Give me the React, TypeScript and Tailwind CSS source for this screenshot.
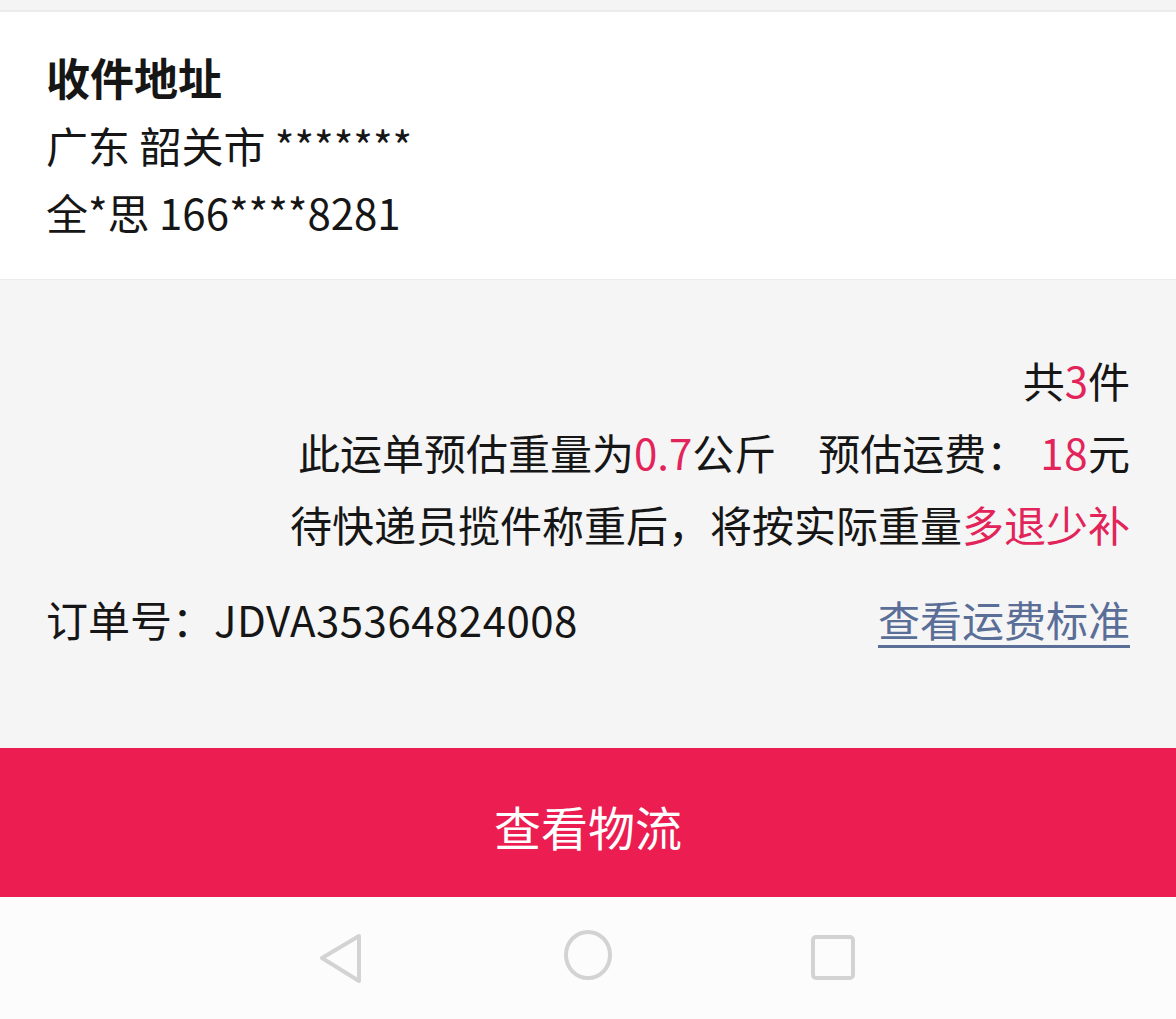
import React from "react";

export default function App() {
  return (
    <div className="w-[1176px] h-[1019px] bg-[#f5f5f5] flex flex-col text-[#161616] font-['Noto_Sans_CJK_SC','Noto_Sans',sans-serif] overflow-hidden">
      <div className="h-[10px] bg-[#f4f4f4] shrink-0" />
      <div className="bg-white border-t-2 border-b border-[#ebebeb] px-[46px] pt-[32px] pb-[34px] shrink-0">
        <div className="text-[44px] leading-[67px] font-bold">收件地址</div>
        <div className="text-[42px] leading-[67px]">广东 韶关市 *******</div>
        <div className="text-[42px] leading-[67px]">全*思 166****8281</div>
      </div>
      <div className="flex-1 flex flex-col px-[46px] pt-[64px] text-[42px]">
        <div className="flex flex-col items-end leading-[72px]">
          <div>
            共<span className="text-[#e2245a]">3</span>件
          </div>
          <div className="flex items-center">
            <span>
              此运单预估重量为<span className="text-[#e2245a]">0.7</span>公斤
            </span>
            <span className="inline-block w-[42px]" />
            <span>预估运费：</span>
            <span className="inline-block w-[12px]" />
            <span>
              <span className="text-[#e2245a] tracking-[0.5px]">18</span>元
            </span>
          </div>
          <div>
            待快递员揽件称重后，将按实际重量<span className="text-[#e2245a]">多退少补</span>
          </div>
        </div>
        <div className="mt-[23px] flex items-center justify-between leading-[72px]">
          <div>
            订单号：<span className="tracking-[0.5px]">JDVA35364824008</span>
          </div>
          <div className="text-[#5a6e98] underline decoration-[3px] underline-offset-[8px]">
            查看运费标准
          </div>
        </div>
      </div>
      <div className="h-[149px] shrink-0 bg-[#eb1d51] flex items-center justify-center text-white text-[47px] pt-[8px]">
        查看物流
      </div>
      <div className="h-[122px] shrink-0 bg-[#fcfcfc] relative">
        <svg className="absolute left-[316px] top-[33px]" width="50" height="56" viewBox="0 0 50 56" fill="none">
          <path d="M43 6 L6 28 L43 51 Z" stroke="#d3d3d3" strokeWidth="4" strokeLinejoin="round" />
        </svg>
        <svg className="absolute left-[562px] top-[32px]" width="52" height="52" viewBox="0 0 52 52" fill="none">
          <ellipse cx="26" cy="26" rx="22" ry="23" stroke="#d3d3d3" strokeWidth="4" />
        </svg>
        <svg className="absolute left-[808px] top-[36px]" width="50" height="50" viewBox="0 0 50 50" fill="none">
          <rect x="5" y="4" width="40" height="41" rx="3" stroke="#d3d3d3" strokeWidth="4" />
        </svg>
      </div>
    </div>
  );
}
